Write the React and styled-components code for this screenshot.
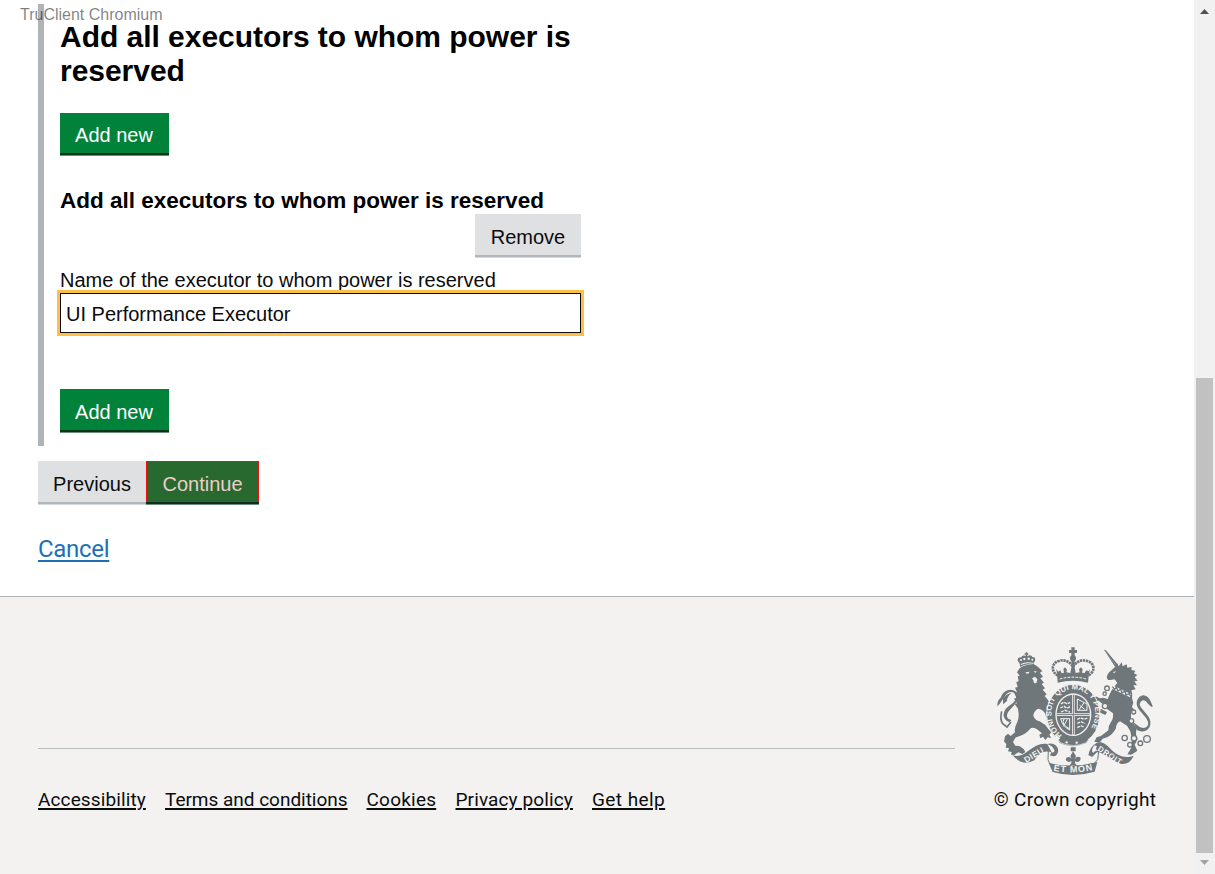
import React from "react";
import styled, { createGlobalStyle } from "styled-components";

const sans = `"Liberation Sans", Arial, sans-serif`;
const transport = `Roboto, "Liberation Sans", sans-serif`;

const GlobalStyle = createGlobalStyle`
  * { box-sizing: border-box; }
  body { margin: 0; background: #fff; color: #0b0c0c; font-family: ${sans}; overflow: hidden; }
`;

const Viewport = styled.div`
  position: relative;
  display: flex;
  width: 1215px;
  height: 874px;
`;

const Page = styled.div`
  display: flex;
  flex-direction: column;
  width: 1194px;
  height: 874px;
`;

const Watermark = styled.div`
  position: absolute;
  left: 20px;
  top: 5px;
  font-size: 16px;
  line-height: 19px;
  color: rgba(0, 0, 0, 0.5);
  white-space: nowrap;
`;

const Main = styled.main`
  height: 596px;
  padding: 4px 38px 0;
`;

const Conditional = styled.section`
  display: flex;
  flex-direction: column;
  align-items: flex-start;
  width: 543px;
  height: 442px;
  padding: 16px 0 0 16px;
  border-left: 6px solid #b1b4b6;
`;

const Heading = styled.h2`
  margin: 0;
  font-size: 30px;
  line-height: 34px;
  letter-spacing: -0.03px;
  font-weight: 700;
  color: #000;
  white-space: nowrap;
`;

const SubHeading = styled.h3`
  margin: 33px 0 0;
  font-size: 22.5px;
  line-height: 26px;
  font-weight: 700;
  color: #000;
  white-space: nowrap;
`;

const tones = {
  primary: { bg: "#00823b", fg: "#fff", edge: "#003618", soft: "#6b8f7b" },
  secondary: { bg: "#dee0e2", fg: "#0b0c0c", edge: "#b1b6bb", soft: "#d6d9db" },
  recorded: { bg: "#28692f", fg: "#eccfc8", edge: "#102c1c", soft: "#6b8f7b" },
};

const Button = styled.button`
  display: block;
  flex: none;
  width: ${(p) => p.$width}px;
  height: ${(p) => p.$height || 41}px;
  margin: ${(p) => p.$margin || "0"};
  padding: ${(p) => (p.$height ? 3 : 4)}px ${(p) => (p.$tone === "primary" ? 1 : 0)}px 0 0;
  border: ${(p) => (p.$tone === "recorded" ? "1px solid #f01010" : "0")};
  border-radius: 0;
  background: ${(p) => tones[p.$tone].bg};
  color: ${(p) => tones[p.$tone].fg};
  box-shadow: 0 2px 0 ${(p) => tones[p.$tone].edge}, 0 3px 0 ${(p) => tones[p.$tone].soft};
  font: 400 20px/24px ${sans};
  text-align: center;
  white-space: nowrap;
`;

const Label = styled.label`
  margin-top: 13px;
  font-size: 20px;
  line-height: 24px;
  white-space: nowrap;
`;

const Input = styled.input`
  display: block;
  width: 521px;
  height: 40px;
  margin: 1px 0 0;
  padding: 4px 5px 1px;
  border: 1px solid #0b0c0c;
  border-radius: 0;
  outline: 3px solid #ffbf47;
  outline-offset: 0;
  background: #fff;
  color: #0b0c0c;
  font: 400 20px/24px ${sans};
`;

const Actions = styled.div`
  display: flex;
  margin-top: 15px;
`;

const Cancel = styled.a`
  display: inline-block;
  margin-top: 32px;
  font: 400 24px/30px ${transport};
  letter-spacing: -0.3px;
  color: #1d70b8;
  text-decoration: underline;
  text-decoration-thickness: 2px;
  text-underline-offset: 3px;
`;

const Footer = styled.footer`
  display: flex;
  justify-content: space-between;
  height: 278px;
  padding: 0 38px;
  border-top: 1px solid #b1b4b6;
  background: #f3f2f1;
`;

const FooterMeta = styled.div`
  width: 917px;
  padding-top: 151px;
`;

const Rule = styled.hr`
  margin: 0 0 38px;
  border: 0;
  border-top: 1px solid #b9bcbd;
`;

const Links = styled.nav`
  display: flex;
  gap: 19px;
`;

const FooterLink = styled.a`
  width: ${(p) => p.$width}px;
  font: 400 19px/26px ${transport};
  letter-spacing: ${(p) => p.$track || "0"};
  color: #0b0c0c;
  text-decoration: underline;
  text-decoration-thickness: 2px;
  text-underline-offset: 2px;
  white-space: nowrap;
`;

const Copyright = styled.div`
  display: flex;
  flex-direction: column;
  align-items: center;
  width: 162px;
  padding-top: 48px;
  font: 400 19px/26px ${transport};
  letter-spacing: 0.3px;
  white-space: nowrap;
`;

const Crest = styled.svg`
  display: block;
  width: 160px;
  height: 132px;
  margin-bottom: 10px;
`;

const Track = styled.div`
  display: flex;
  flex-direction: column;
  align-items: center;
  justify-content: space-between;
  width: 21px;
  height: 874px;
  padding: 9px 0;
  background: #f1f1f1;
`;

const Thumb = styled.div`
  width: 17px;
  height: 475px;
  margin: 364px 2px 7px;
  background: #c1c1c1;
`;

function CoatOfArms() {
  const bg = "#f3f2f1";
  const ink = "#6f777b";
  return (
    <Crest viewBox="30 30 480 396" fill={ink} stroke="none" aria-label="Royal coat of arms">
      <defs>
        <path id="garter" d="M231 300 C190 270 190 205 224 178 C250 158 282 158 306 178 C340 205 340 270 299 300" />
        <path id="motto" d="M205 407 Q264 419 330 404" />
      </defs>

      {/* lion */}
      <path d="M106 96 L103 83 C94 77 98 65 109 67 C112 60 119 60 122 64 V59 H119 V55 H122 V52 H127 V55 H130 V59 H127 V64 C134 58 140 60 142 66 C153 66 153 77 146 83 L149 92 Q126 82 106 96Z" />
      <g fill={bg}>
        <circle cx="108" cy="75" r="3" /><circle cx="118" cy="72" r="3.5" /><circle cx="131" cy="71" r="3.5" /><circle cx="142" cy="74" r="3" />
        <path d="M107 87 Q125 78 145 84 L146 87 Q125 81 108 90Z" />
      </g>
      <path d="M96 112 Q103 96 118 92 Q139 86 151 90 L160 97 L172 108 L165 113 L174 125 L166 130 L177 143 L170 147 L180 160 L173 164 L185 178 L179 183 Q190 194 198 211 L203 228 L210 240 L201 239 L199 250 L191 241 L184 250 L181 236 Q173 222 159 221 Q145 229 145 243 Q151 257 164 259 L181 270 L190 282 L199 292 L193 299 L199 309 L188 307 L181 315 L174 305 L166 310 L163 299 L171 295 L155 282 Q141 275 135 282 Q122 298 106 302 L91 308 L84 321 L91 332 L103 333 L116 342 L121 351 L112 357 L100 352 L88 360 L78 359 L80 351 L69 349 L72 339 L62 338 L64 328 L57 319 L60 304 L69 296 L77 303 L90 292 Q87 278 96 263 Q102 249 101 237 L99 221 L89 207 L96 205 L87 191 L94 188 L88 174 L96 172 L90 158 L98 156 L94 141 L101 139 L98 124 L104 122Z" />
      <path d="M121 112 L134 110 L131 115 L125 116Z M146 109 L155 109 L151 114Z M141 130 L150 125 L157 133 L154 145 L147 144 L145 136Z" fill={bg} />
      <path d="M74 262 Q49 251 58 230 C62 214 90 208 94 187 Q93 172 79 171 C61 169 55 198 37 214 Q36 196 47 188 C55 165 78 157 94 171 C108 189 91 208 77 222 C62 237 62 252 79 255 Z" />
      <path d="M50 229 Q44 253 53 266 L66 276 L78 261" fill="none" stroke={ink} strokeWidth="5" />
      <path d="M54 190 Q62 178 80 174 Q66 184 66 198 L54 208Z" />

      {/* crown */}
      <path d="M259 37 H269 V45 H276 V54 H269 V64 H259 V54 H252 V45 H259Z" />
      <circle cx="264" cy="70" r="9" />
      <path d="M219 122 C197 111 199 84 221 78 C239 72 254 80 264 95 C274 80 289 72 307 78 C330 84 332 111 309 122" fill="none" stroke={ink} strokeWidth="8" strokeDasharray="7 2" />
      <path d="M259 72 H269 V121 H259Z" />
      <path d="M216 116 L214 102 L220 110 L226 106 L230 115 L237 113 L235 102 L240 97 L246 104 L244 112 L256 114 L258 102 L264 96 L270 102 L272 114 L284 112 L282 103 L288 97 L293 103 L291 113 L299 114 L304 106 L311 109 L315 102 L311 123 L309 143 Q264 131 218 143Z" />
      <path d="M224 132 Q264 121 304 132" fill="none" stroke={bg} strokeWidth="3" strokeDasharray="8 4" />

      {/* unicorn */}
      <path d="M357 44 L362 45 L399 89 L390 95Z" />
      <path d="M361 51 L393 91" stroke={bg} strokeWidth="1.5" strokeDasharray="3 4" />
      <path d="M365 127 Q368 113 377 108 L390 96 L396 84 L401 94 L410 82 L413 94 L425 88 L427 98 L440 96 L439 105 L451 107 L447 115 L457 120 L449 127 L458 137 L448 139 L456 151 L445 151 L452 163 L439 166 Q444 179 441 190 L445 203 L441 216 L447 224 L438 230 L438 244 Q436 256 446 266 L454 280 L453 300 L458 312 L449 329 L457 347 L446 355 L438 359 L427 358 L434 347 L441 333 L440 309 L436 289 L426 272 L405 259 Q394 263 393 280 Q383 299 368 306 L353 311 L344 323 L328 320 L335 307 L348 303 L370 286 Q370 271 378 261 Q386 251 384 235 L367 223 L354 208 L341 197 L333 204 L336 218 L350 223 L366 231 L361 240 L346 233 L329 224 L322 207 L321 196 L331 183 L344 190 L354 188 L368 192 L374 178 L384 158 L397 144 L389 133 L376 135 L369 135Z" />
      <path d="M384 111 L394 109 L387 115Z" fill={bg} />
      <path d="M380 155 L437 182" stroke={bg} strokeWidth="10" />
      <path d="M382 155 L389 163 L394 157 L399 168 L407 162 L411 174 L420 168 L423 180 L433 176 L437 184" fill="none" stroke={ink} strokeWidth="4" />
      <path d="M444 260 L461 274 C477 286 495 275 488 259 C483 241 456 226 455 207 C455 188 469 176 482 182 Q494 186 503 214 C503 221 493 210 489 206 C478 188 466 196 464 208 C465 221 495 241 496 260 C499 284 475 297 455 284Z" />
      <path d="M468 188 Q490 186 500 214 Q488 205 480 194Z" />
      <g fill={bg} stroke={ink} strokeWidth="4">
        <circle cx="366" cy="160" r="7" /><circle cx="359" cy="176" r="5" /><circle cx="360" cy="213" r="8" />
        <circle cx="446" cy="231" r="6" /><circle cx="439" cy="258" r="7" /><circle cx="419" cy="309" r="8" />
        <circle cx="435" cy="329" r="7" /><circle cx="447" cy="310" r="8" /><circle cx="466" cy="325" r="7" />
        <circle cx="486" cy="312" r="10" />
      </g>

      {/* garter and shield */}
      <ellipse cx="265" cy="239" rx="80" ry="91" stroke={bg} strokeWidth="3" />
      <ellipse cx="265" cy="239" rx="54" ry="64" fill={bg} />
      <ellipse cx="265" cy="239" rx="50" ry="60" />
      <path d="M265 179 V299 M215 239 H315" stroke={bg} strokeWidth="8" />
      <path d="M265 180 V298 M216 239 H314" stroke={ink} strokeWidth="3" />
      <path d="M228 207 L237 201 L246 207 L255 202 M226 219 L237 214 L246 220 L255 215 M228 231 L239 226 L255 231 M277 253 L287 248 L298 253 L307 249 M277 265 L288 260 L300 266 M277 278 L288 272 L297 277" fill="none" stroke={bg} strokeWidth="4" strokeDasharray="9 3" />
      <path d="M277 192 V226 H306 V207 Z M284 211 L299 223 M298 202 L281 226" fill="none" stroke={bg} strokeWidth="3" />
      <path d="M227 251 H254 V285 Q232 274 227 251 M237 252 Q227 268 253 281 M247 253 L235 274" fill="none" stroke={bg} strokeWidth="3" />
      <text fill={bg} fontFamily="Liberation Sans, sans-serif" fontSize="23" fontWeight="700" textLength="338">
        <textPath href="#garter">HONI SOIT QUI MAL Y PENSE</textPath>
      </text>
      <path d="M214 303 L224 324 Q262 343 304 324 L317 304 Q267 327 214 303Z" />
      <path d="M217 307 L225 323 Q265 340 304 323 L314 308" fill="none" stroke={bg} strokeWidth="2" />
      <g fill={bg}><circle cx="245" cy="322" r="3.5" /><circle cx="275" cy="323" r="3.5" /><path d="M209 298 L226 309 L218 317Z" /></g>

      {/* motto scroll */}
      <path d="M82 360 Q105 369 128 349 C150 333 166 323 187 327 L201 353 C181 344 163 354 148 376 Q113 396 82 360Z" />
      <path d="M187 327 C209 319 227 341 217 356 Q210 369 195 361 L199 352 Q210 354 208 346 Q204 333 187 327Z" />
      <path d="M190 345 L189 374 Q191 386 203 391 M342 342 L338 374 L325 388" fill="none" stroke={ink} strokeWidth="3" />
      <path d="M191 384 Q263 401 337 381 L329 410 Q265 429 203 411Z" />
      <path d="M336 323 Q355 318 374 339 C393 360 416 369 435 365 L446 363 Q434 389 409 387 C379 377 355 350 336 352 L321 366 L310 360 Q315 334 336 323Z" />
      <path d="M329 331 Q316 344 324 354 Q332 346 339 348 Q329 343 336 334Z" fill={bg} />
      <g fill={bg} fontFamily="Liberation Sans, sans-serif" fontWeight="700">
        <text x="124" y="384" fontSize="25" textLength="64" transform="rotate(-32 124 384)">DIEU</text>
        <text fontSize="27" textLength="119"><textPath href="#motto">ET MON</textPath></text>
        <text x="337" y="345" fontSize="23" textLength="80" transform="rotate(33 337 345)">DROIT</text>
      </g>
      <path d="M257 337 H272 V349 H257Z M264 349 L273 363 L267 377 Q273 361 286 367 Q289 379 276 381 L270 379 V384 L277 394 L264 390 L252 394 L259 384 V379 L252 381 Q239 378 244 368 Q257 361 262 377 L256 363Z" />
    </Crest>
  );
}

const footerLinks = [
  { text: "Accessibility", width: 108, track: "0.12px" },
  { text: "Terms and conditions", width: 182.5, track: "-0.02px" },
  { text: "Cookies", width: 70, track: "0.22px" },
  { text: "Privacy policy", width: 117.5, track: "0.12px" },
  { text: "Get help", width: 74, track: "0.42px" },
];

export default function App() {
  return (
    <>
      <GlobalStyle />
      <Viewport>
        <Page>
          <Main>
            <Conditional>
              <Heading>
                Add all executors to whom power is
                <br />
                reserved
              </Heading>
              <Button $tone="primary" $width={109} $height={40} $margin="25px 0 2px">Add new</Button>
              <SubHeading>Add all executors to whom power is reserved</SubHeading>
              <Button $tone="secondary" $width={106} $margin="0 0 0 415px">Remove</Button>
              <Label htmlFor="executor">Name of the executor to whom power is reserved</Label>
              <Input id="executor" defaultValue="UI Performance Executor" />
              <Button $tone="primary" $width={109} $margin="56px 0 0">Add new</Button>
            </Conditional>
            <Actions>
              <Button $tone="secondary" $width={108}>Previous</Button>
              <Button $tone="recorded" $width={113}>Continue</Button>
            </Actions>
            <Cancel>Cancel</Cancel>
          </Main>
          <Footer>
            <FooterMeta>
              <Rule />
              <Links>
                {footerLinks.map((l) => (
                  <FooterLink key={l.text} $width={l.width} $track={l.track}>{l.text}</FooterLink>
                ))}
              </Links>
            </FooterMeta>
            <Copyright>
              <CoatOfArms />
              © Crown copyright
            </Copyright>
          </Footer>
        </Page>
        <Track>
          <svg width="9" height="5" viewBox="0 0 9 5"><path d="M0 5 L4.5 0 L9 5Z" fill="#505050" /></svg>
          <Thumb />
          <svg width="9" height="5" viewBox="0 0 9 5"><path d="M0 0 L4.5 5 L9 0Z" fill="#a3a3a3" /></svg>
        </Track>
        <Watermark>TruClient Chromium</Watermark>
      </Viewport>
    </>
  );
}
